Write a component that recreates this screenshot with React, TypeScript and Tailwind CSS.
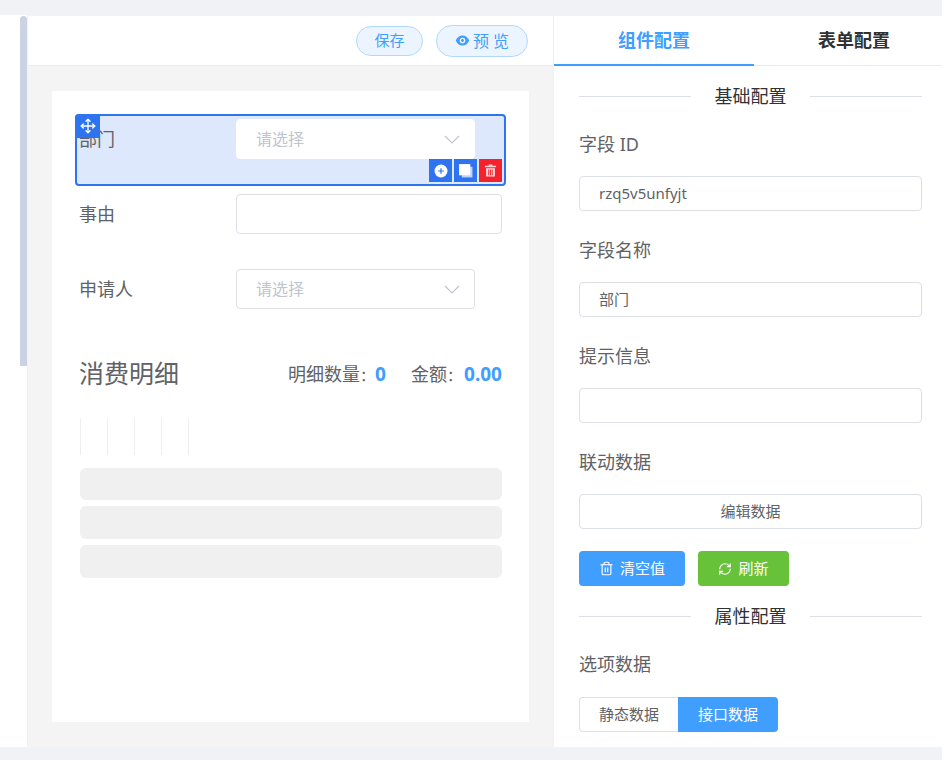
import { Move, RefreshCw, Trash2 } from "lucide-react";

const FONT = "font-['Noto_Sans','Noto_Sans_CJK_SC',sans-serif]";

function SelectBox({ dim }: { dim?: boolean }) {
  return (
    <div
      className={`w-[239px] h-10 shrink-0 flex items-center justify-between pl-[19px] pr-[14px] rounded-[4px] bg-white border ${
        dim ? "border-white" : "border-[#dcdfe6]"
      }`}
    >
      <span className="text-[16px] text-[#c0c4cc]">请选择</span>
      <svg viewBox="0 0 16 9" className="w-[16px] h-[9px]" fill="none">
        <path d="M1 1l7 7 7-7" stroke="#c0c4cc" strokeWidth="1.200" />
      </svg>
    </div>
  );
}

function Divider({ title }: { title: string }) {
  return (
    <div className="h-[60px] flex items-center">
      <div className="flex-1 h-px bg-[#dcdfe6]" />
      <span className="w-[119px] text-center text-[18px] text-[#303133]">{title}</span>
      <div className="flex-1 h-px bg-[#dcdfe6]" />
    </div>
  );
}

function Field({ label, value }: { label: string; value?: string }) {
  return (
    <div className="mb-[21px]">
      <div className="h-9 mb-[14px] flex items-center text-[18px] text-[#606266]">{label}</div>
      <div className="h-[35px] flex items-center pl-[19px] rounded-[4px] border border-[#dcdfe6] text-[15px] text-[#606266]">
        {value}
      </div>
    </div>
  );
}

export default function App() {
  return (
    <div className={`h-[760px] overflow-hidden bg-[#f0f2f5] pt-[15px] ${FONT}`}>
      <div className="h-[732px] flex bg-white">
        {/* left strip with scrollbar */}
        <div className="w-[28px] shrink-0 pl-5 pt-px border-r border-[#f1f1f3]">
          <div className="w-[7px] h-[350px] rounded-t-[4px] bg-[#c9d3e4]" />
        </div>

        {/* middle */}
        <div className="w-[525px] shrink-0 flex flex-col">
          <div className="h-[51px] shrink-0 flex items-center justify-end gap-[13px] pr-[25px] border-b border-[#f1e8e6] border-t border-t-[#f0f2f5]">
            <button className="w-[67px] h-[30px] rounded-full bg-[#ecf5ff] border border-[#b3d8ff] text-[15px] text-[#409eff]">
              保存
            </button>
            <button className="w-[92px] h-[32px] rounded-full bg-[#ecf5ff] border border-[#b3d8ff] text-[16px] text-[#409eff] flex items-center justify-center gap-[3px]">
              <svg viewBox="0 0 16 16" className="w-[15px] h-[15px]" fill="none">
                <path d="M0.800 8C2.500 4 5 2.600 8 2.600S13.500 4 15.200 8C13.500 12 11 13.400 8 13.400S2.500 12 0.800 8z" fill="#409eff" />
                <circle cx="8" cy="8" r="3" fill="#ecf5ff" />
                <circle cx="8" cy="8" r="1.500" fill="#409eff" />
              </svg>
              <span>预 览</span>
            </button>
          </div>

          <div className="flex-1 bg-[#f4f4f5] pt-[25px] pb-[25px] pl-6 pr-6">
            <div className="h-[631px] bg-white pt-[23px] px-[23px]">
              {/* selected row */}
              <div className="relative h-[72px] mb-[3px] border-2 border-[#2e73f0] rounded-[4px] bg-[#dde8fc] pt-[3px] pl-[2px] pr-[2px] flex items-start">
                <div className="w-[157px] h-10 flex items-center text-[18px] text-[#606266]">部门</div>
                <SelectBox dim />
                <div className="absolute -left-[2px] -top-[2px] w-[25px] h-6 bg-[#2e73f0] rounded-tl-[4px] flex items-center justify-center">
                  <Move className="w-[16px] h-[16px] text-white" strokeWidth={2} />
                </div>
                <div className="absolute right-[2px] bottom-[2px] flex gap-[2px]">
                  <div className="w-[23px] h-[23px] bg-[#2e73f0] flex items-center justify-center">
                    <svg viewBox="0 0 14 14" className="w-[14px] h-[14px]">
                      <circle cx="7" cy="7" r="6.500" fill="#fff" />
                      <path d="M7 4.200v5.600M4.200 7h5.600" stroke="#2e73f0" strokeWidth="1.200" />
                    </svg>
                  </div>
                  <div className="w-[23px] h-[23px] bg-[#2e73f0] flex items-center justify-center">
                    <svg viewBox="0 0 14 14" className="w-[15px] h-[15px]">
                      <path d="M3.500 3.500h10v10h-10z" fill="#bcd2f8" />
                      <path d="M1 1h10.500v10.500H1z" fill="#fff" />
                    </svg>
                  </div>
                  <div className="w-[23px] h-[23px] bg-[#f5222d] flex items-center justify-center">
                    <svg viewBox="0 0 14 14" className="w-[13px] h-[13px]">
                      <path d="M5 0.500h4v1.500h4v1.500H1V2h4z" fill="#fbd5d7" />
                      <path d="M2.200 4.500h9.600V13.500H2.200zM4.600 6v6h1V6zM6.500 6v6h1V6zM8.400 6v6h1V6z" fill="#fbd5d7" fillRule="evenodd" />
                    </svg>
                  </div>
                </div>
              </div>

              {/* plain rows */}
              <div className="h-[75px] pt-[5px] pl-[4px] pr-[4px] flex items-start">
                <div className="w-[157px] h-10 flex items-center text-[18px] text-[#606266]">事由</div>
                <div className="flex-1 h-10 rounded-[4px] border border-[#dcdfe6]" />
              </div>
              <div className="h-[75px] pt-[5px] pl-[4px] pr-[4px] flex items-start">
                <div className="w-[157px] h-10 flex items-center text-[18px] text-[#606266]">申请人</div>
                <SelectBox />
              </div>

              {/* detail block */}
              <div className="pl-[5px] pr-[4px] pt-[10px]">
                <div className="h-[50px] flex items-center justify-between">
                  <span className="-ml-px text-[25px] text-[#606266]">消费明细</span>
                  <div className="flex items-center text-[18px] text-[#606266] whitespace-nowrap">
                    <span>
                      明细数量<span className="text-[15px]">：</span>
                    </span>
                    <span className="w-[11px] text-center text-[19px] font-bold text-[#409eff]">0</span>
                    <span className="ml-[25px] mr-[2px]">
                      金额<span className="text-[15px]">：</span>
                    </span>
                    <span className="text-[19px] font-bold text-[#409eff]">0.00</span>
                  </div>
                </div>
                <div className="mt-[19px] h-[37px] flex">
                  {[0, 1, 2, 3].map((i) => (
                    <div key={i} className="w-[27px] border-l border-[#eeeeee]" />
                  ))}
                  <div className="w-px bg-[#eeeeee]" />
                </div>
                <div className="mt-[13px] h-8 rounded-[6px] bg-[#f0f0f0]" />
                <div className="mt-[6px] h-[33px] rounded-[6px] bg-[#f0f0f0]" />
                <div className="mt-[6px] h-[33px] rounded-[6px] bg-[#f0f0f0]" />
              </div>
            </div>
          </div>
        </div>

        {/* right panel */}
        <div className="w-[389px] shrink-0 overflow-hidden border-l border-[#f1f1f3]">
          <div className="flex h-[51px] w-[400px] border-b border-[#e8eaee] border-t border-t-[#f0f2f5] text-[18px] font-bold">
            <div className="relative w-[200px] shrink-0 flex items-center justify-center text-[#409eff]">
              组件配置
              <div className="absolute left-0 right-0 -bottom-px h-[2px] bg-[#409eff]" />
            </div>
            <div className="w-[200px] shrink-0 flex items-center justify-center text-[#303133]">表单配置</div>
          </div>

          <div className="pl-[25px] pr-[20px]">
            <Divider title="基础配置" />
            <Field label="字段 ID" value="rzq5v5unfyjt" />
            <Field label="字段名称" value="部门" />
            <Field label="提示信息" />
            <div className="h-9 mb-[14px] flex items-center text-[18px] text-[#606266]">联动数据</div>
            <button className="w-full h-[35px] mb-[22px] rounded-[4px] border border-[#dcdfe6] text-[15px] text-[#606266]">
              编辑数据
            </button>
            <div className="flex gap-[13px]">
              <button className="w-[106px] h-[35px] rounded-[4px] bg-[#409eff] text-white text-[15px] flex items-center justify-center gap-[6px]">
                <Trash2 className="w-[15px] h-[15px]" strokeWidth={1.800} />
                清空值
              </button>
              <button className="w-[91px] h-[35px] rounded-[4px] bg-[#67c23a] text-white text-[15px] flex items-center justify-center gap-[6px]">
                <RefreshCw className="w-[14px] h-[14px]" strokeWidth={2} />
                刷新
              </button>
            </div>
            <Divider title="属性配置" />
            <div className="h-9 mb-[15px] flex items-center text-[18px] text-[#606266]">选项数据</div>
            <div className="flex text-[15px]">
              <button className="w-[99px] h-[35px] rounded-l-[4px] border border-r-0 border-[#dcdfe6] text-[#606266]">
                静态数据
              </button>
              <button className="w-[100px] h-[35px] rounded-r-[4px] bg-[#409eff] text-white">接口数据</button>
            </div>
          </div>
        </div>
      </div>
    </div>
  );
}
